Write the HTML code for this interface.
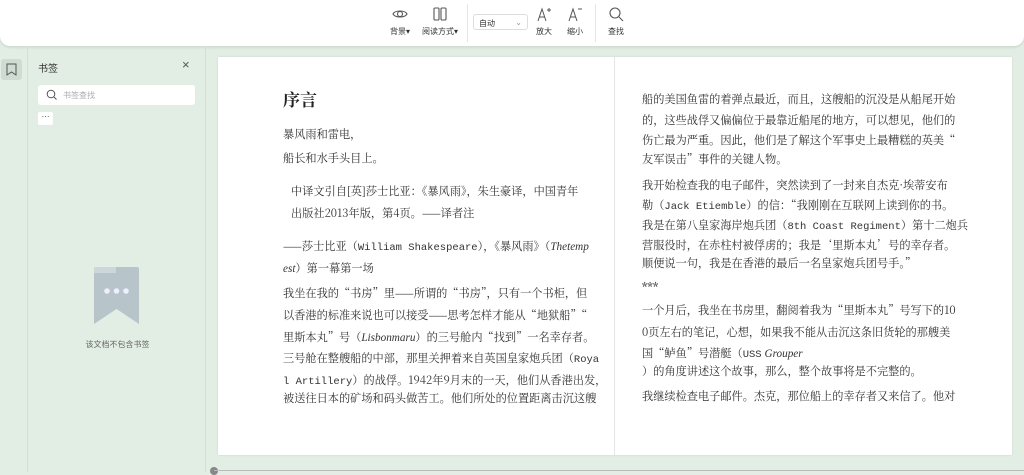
<!DOCTYPE html>
<html><head><meta charset="utf-8"><style>
*{margin:0;padding:0;box-sizing:border-box}
body{width:1024px;height:472px;overflow:hidden;background:#e2eee3;font-family:"Liberation Sans","Noto Sans CJK SC",sans-serif;position:relative}
.tb{position:absolute;left:0;top:0;width:1024px;height:46px;background:#fff;border-radius:0 0 10px 10px;box-shadow:0 1px 3px rgba(0,0,0,.12)}
.btn{position:absolute;top:6px;text-align:center;font-size:8px;color:#333}
.btn svg{display:block;margin:0 auto 4px}
.sep{position:absolute;top:4px;width:1px;height:38px;background:#e6e6e6}
.sel{position:absolute;left:473px;top:14px;width:55px;height:16px;border:1px solid #ddd;border-radius:3px;font-size:8px;padding:3px 5px;color:#333}
.strip{position:absolute;left:0;top:46px;width:28px;height:426px;border-right:1px solid #d2dfd4}
.side{position:absolute;left:29px;top:46px;width:177px;height:426px;border-right:1px solid #d2dfd4}
.page{position:absolute;left:218px;top:57px;width:794px;height:398px;background:#fff;box-shadow:0 0 2px rgba(0,0,0,.1)}
.l{position:absolute;white-space:nowrap;font-family:"Noto Serif CJK SC",serif;font-size:11.2px;line-height:16px;color:#333}
.m{font-family:"Liberation Mono",monospace;font-size:10.5px}
.l i{font-style:italic;font-family:"Liberation Serif",serif}
</style></head><body>
<div class="tb">
 <div class="btn" style="left:388px;width:24px"><svg width="16" height="16" viewBox="0 0 16 16" fill="none" stroke="#555" stroke-width="1.1"><path d="M1 8c2-4 12-4 14 0c-2 4-12 4-14 0z"/><circle cx="8" cy="8" r="2.5"/></svg>背景▾</div>
 <div class="btn" style="left:419px;width:42px"><svg width="16" height="16" viewBox="0 0 16 16" fill="none" stroke="#555" stroke-width="1.1"><rect x="2" y="2" width="5" height="12" rx="1"/><rect x="9" y="2" width="5" height="12" rx="1"/></svg>阅读方式▾</div>
 <div class="sep" style="left:467px"></div>
 <div class="sel">自动<span style="position:absolute;right:5px;color:#999">⌄</span></div>
 <div class="btn" style="left:533px;width:22px"><svg width="16" height="16" viewBox="0 0 16 16" fill="none" stroke="#555" stroke-width="1"><path d="M2 15L6 3l4 12M3.5 11h5M11 4h4M13 2v4"/></svg>放大</div>
 <div class="btn" style="left:564px;width:22px"><svg width="16" height="16" viewBox="0 0 16 16" fill="none" stroke="#555" stroke-width="1"><path d="M2 15L6 3l4 12M3.5 11h5M11 3h4"/></svg>缩小</div>
 <div class="sep" style="left:595px"></div>
 <div class="btn" style="left:605px;width:22px"><svg width="16" height="16" viewBox="0 0 16 16" fill="none" stroke="#555" stroke-width="1.1"><circle cx="7" cy="7" r="5"/><path d="M11 11l4 4"/></svg>查找</div>
</div>
<div class="strip"><div style="position:absolute;left:1px;top:13px;width:21px;height:21px;background:#cfdcd1;border-radius:3px"><svg width="21" height="21" viewBox="0 0 21 21" fill="none" stroke="#555" stroke-width="1"><path d="M6 5h9v11l-4.5-3L6 16z"/></svg></div></div>
<div class="side">
 <div style="position:absolute;left:9px;top:14px;font-size:10px;color:#333">书签</div>
 <div style="position:absolute;left:153px;top:11px;font-size:13px;color:#555">×</div>
 <div style="position:absolute;left:9px;top:39px;width:157px;height:20px;background:#fff;border-radius:3px;font-size:8px;color:#aaa;padding:5px 0 0 25px"><svg style="position:absolute;left:8px;top:4px" width="11" height="11" viewBox="0 0 11 11" fill="none" stroke="#555"><circle cx="5" cy="5" r="3.8"/><path d="M8 8l2.5 2.5"/></svg>书签查找</div>
 <div style="position:absolute;left:9px;top:66px;width:15px;height:13px;background:#fff;border-radius:2px;font-size:8px;text-align:center;line-height:9px;color:#333">···</div>
 <svg style="position:absolute;left:65px;top:221px" width="45" height="57" viewBox="0 0 45 57"><path d="M2 0h41a2 2 0 0 1 2 2v55L22.5 42 0 57V2a2 2 0 0 1 2-2z" fill="#b7c5cb"/><path d="M0 6V2a2 2 0 0 1 2-2h20v6z" fill="#cdd7d9"/><circle cx="13" cy="24" r="2.8" fill="#eef"/><circle cx="22.5" cy="24" r="2.8" fill="#eef"/><circle cx="32" cy="24" r="2.8" fill="#eef"/></svg>
 <div style="position:absolute;left:0;width:177px;top:293px;text-align:center;font-size:8px;color:#666">该文档不包含书签</div>
</div>
<div class="page">
 <div style="position:absolute;left:396px;top:0;width:1px;height:398px;background:#e5e5e5"></div>
 <div class="l" style="left:65px;top:31px;font-size:17px;line-height:22px;font-weight:bold;color:#222">序言</div>
 <div class="l" style="left:65px;top:69px">暴风雨和雷电，</div>
 <div class="l" style="left:65px;top:93px">船长和水手头目上。</div>
 <div class="l" style="left:73px;top:126px">中译文引自[英]莎士比亚：《暴风雨》，朱生豪译，中国青年</div>
 <div class="l" style="left:73px;top:148px">出版社2013年版，第4页。——译者注</div>
 <div class="l" style="left:65px;top:181px">——莎士比亚（<span class="m">William Shakespeare</span>），《暴风雨》（<i>Thetemp</i></div>
 <div class="l" style="left:65px;top:203px"><i>est</i>）第一幕第一场</div>
 <div class="l" style="left:65px;top:228px">我坐在我的“书房”里——所谓的“书房”，只有一个书柜，但</div>
 <div class="l" style="left:65px;top:250px">以香港的标准来说也可以接受——思考怎样才能从“地狱船”“</div>
 <div class="l" style="left:65px;top:272px">里斯本丸”号（<i>Lisbonmaru</i>）的三号舱内“找到”一名幸存者。</div>
 <div class="l" style="left:65px;top:293px">三号舱在整艘船的中部，那里关押着来自英国皇家炮兵团（<span class="m">Roya</span></div>
 <div class="l" style="left:65px;top:315px"><span class="m">l Artillery</span>）的战俘。1942年9月末的一天，他们从香港出发，</div>
 <div class="l" style="left:65px;top:333px">被送往日本的矿场和码头做苦工。他们所处的位置距离击沉这艘</div>

 <div class="l" style="left:424px;top:34px">船的美国鱼雷的着弹点最近，而且，这艘船的沉没是从船尾开始</div>
 <div class="l" style="left:424px;top:55px">的，这些战俘又偏偏位于最靠近船尾的地方，可以想见，他们的</div>
 <div class="l" style="left:424px;top:75px">伤亡最为严重。因此，他们是了解这个军事史上最糟糕的英美“</div>
 <div class="l" style="left:424px;top:94px">友军误击”事件的关键人物。</div>
 <div class="l" style="left:424px;top:120px">我开始检查我的电子邮件，突然读到了一封来自杰克·埃蒂安布</div>
 <div class="l" style="left:424px;top:140px">勒（<span class="m">Jack Etiemble</span>）的信：“我刚刚在互联网上读到你的书。</div>
 <div class="l" style="left:424px;top:160px">我是在第八皇家海岸炮兵团（<span class="m">8th Coast Regiment</span>）第十二炮兵</div>
 <div class="l" style="left:424px;top:180px">营服役时，在赤柱村被俘虏的；我是‘里斯本丸’号的幸存者。</div>
 <div class="l" style="left:424px;top:198px">顺便说一句，我是在香港的最后一名皇家炮兵团号手。”</div>
 <div class="l" style="left:424px;top:222px;font-weight:bold">***</div>
 <div class="l" style="left:424px;top:245px">一个月后，我坐在书房里，翻阅着我为“里斯本丸”号写下的10</div>
 <div class="l" style="left:424px;top:267px">0页左右的笔记，心想，如果我不能从击沉这条旧货轮的那艘美</div>
 <div class="l" style="left:424px;top:288px">国“鲈鱼”号潜艇（<span class="m">USS</span> <i>Grouper</i></div>
 <div class="l" style="left:424px;top:306px">）的角度讲述这个故事，那么，整个故事将是不完整的。</div>
 <div class="l" style="left:424px;top:331px">我继续检查电子邮件。杰克，那位船上的幸存者又来信了。他对</div>
</div>
<div style="position:absolute;left:210px;top:467px;width:8px;height:8px;border-radius:50%;background:#888"></div>
<div style="position:absolute;left:214px;top:470px;width:810px;height:1px;background:#bbb"></div>
</body></html>
